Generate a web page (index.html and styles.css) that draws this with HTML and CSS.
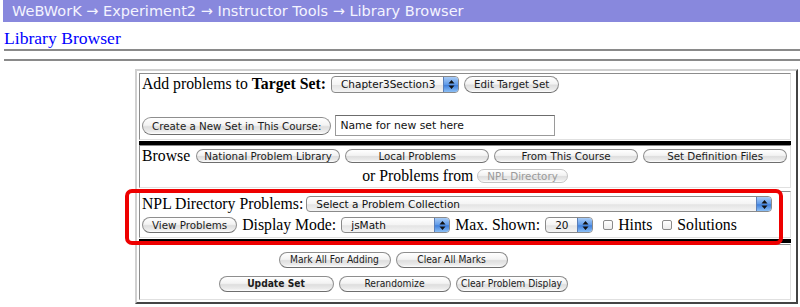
FILE: index.html
```html
<!DOCTYPE html>
<html lang="en">
<head>
  <meta charset="UTF-8" />
  <title>Library Browser</title>
  <link rel="stylesheet" href="styles.css">
</head>
<body>
  <div class="topbar">WeBWorK &rarr; Experiment2 &rarr; Instructor Tools &rarr; Library Browser</div>
  <h2 class="page-title"><a href="#">Library Browser</a></h2>
  <hr class="rule">
  <hr class="rule second">

  <div class="browser">
    <div class="panel">
      <div class="cell target-cell">
        <div class="row">
          <span class="label">Add problems to <b>Target Set:</b></span>
          <span class="popup set-popup">
            <span class="popup-text">Chapter3Section3</span>
            <span class="popup-arrows"><svg width="7" height="11" viewBox="0 0 7 11"><path d="M3.5 1 L6.5 4.5 L0.5 4.5 Z M3.5 10 L6.5 6.5 L0.5 6.5 Z" fill="#111"/></svg></span>
          </span>
          <button class="btn tall">Edit Target Set</button>
        </div>
        <div class="row new-set-row">
          <button class="btn taller">Create a New Set in This Course:</button>
          <input class="text-field" type="text" value="Name for new set here">
        </div>
      </div>

      <div class="bar"></div>

      <div class="cell browse-cell">
        <div class="row">
          <span class="label browse-label">Browse</span>
          <button class="btn browse-btn">National Problem Library</button>
          <button class="btn browse-btn">Local Problems</button>
          <button class="btn browse-btn">From This Course</button>
          <button class="btn browse-btn">Set Definition Files</button>
        </div>
        <div class="row centered">
          <span class="label">or Problems from</span>
          <button class="btn disabled">NPL Directory</button>
        </div>
      </div>

      <div class="cell npl-cell">
        <div class="row">
          <span class="label">NPL Directory Problems:</span>
          <span class="popup collection-popup">
            <span class="popup-text">Select a Problem Collection</span>
            <span class="popup-arrows"><svg width="7" height="11" viewBox="0 0 7 11"><path d="M3.5 1 L6.5 4.5 L0.5 4.5 Z M3.5 10 L6.5 6.5 L0.5 6.5 Z" fill="#111"/></svg></span>
          </span>
        </div>
        <div class="row">
          <button class="btn">View Problems</button>
          <span class="label">Display Mode:</span>
          <span class="popup mode-popup">
            <span class="popup-text">jsMath</span>
            <span class="popup-arrows"><svg width="7" height="11" viewBox="0 0 7 11"><path d="M3.5 1 L6.5 4.5 L0.5 4.5 Z M3.5 10 L6.5 6.5 L0.5 6.5 Z" fill="#111"/></svg></span>
          </span>
          <span class="label">Max. Shown:</span>
          <span class="popup count-popup">
            <span class="popup-text">20</span>
            <span class="popup-arrows"><svg width="7" height="11" viewBox="0 0 7 11"><path d="M3.5 1 L6.5 4.5 L0.5 4.5 Z M3.5 10 L6.5 6.5 L0.5 6.5 Z" fill="#111"/></svg></span>
          </span>
          <label class="check"><span class="box"></span>Hints</label>
          <label class="check"><span class="box"></span>Solutions</label>
        </div>
      </div>

      <div class="bar"></div>

      <div class="cell actions-cell">
        <div class="row centered">
          <button class="btn action-btn">Mark All For Adding</button>
          <button class="btn action-btn">Clear All Marks</button>
        </div>
        <div class="row centered">
          <button class="btn action-btn update">Update Set</button>
          <button class="btn action-btn">Rerandomize</button>
          <button class="btn action-btn">Clear Problem Display</button>
        </div>
      </div>
    </div>

    <!-- annotation drawn over the screenshot -->
    <div class="highlight"></div>
  </div>
</body>
</html>
```

FILE: styles.css
```css
* {
  box-sizing: border-box;
}

body {
  margin: 0;
  background: #fff;
  font-family: "Liberation Serif", "Times New Roman", serif;
  font-size: 15.75px;
  color: #000;
}

.topbar {
  margin-left: 3px;
  height: 22px;
  padding-left: 9px;
  background: #8888dd;
  color: #f4f4ff;
  font-family: "DejaVu Sans", sans-serif;
  font-size: 14.5px;
  line-height: 22px;
  white-space: nowrap;
}

.page-title {
  margin: 6px 0 0 4px;
  height: 20px;
  font-size: 17.6px;
  font-weight: normal;
  line-height: 21px;
}

.page-title a {
  color: #0000ff;
  text-decoration: none;
}

.rule {
  margin: 1px 0 0 4px;
  height: 0;
  border: 0;
  border-top: 2px solid #8a8a8a;
}

.rule.second {
  margin-top: 8px;
}

.browser {
  position: relative;
  margin: 8px 0 0 135px;
  width: 663px;
}

.panel {
  border: 2px solid;
  border-color: #d0d0d0 #444 #444 #d0d0d0;
  padding: 2px 5px 2px 2px;
}

.cell {
  border: 1px solid;
  border-color: #8c8c8c #e0e0e0 #e0e0e0 #8c8c8c;
  padding: 1px 2px 2px 2px;
}

.bar {
  margin-top: 1px;
  height: 4px;
  background: #000;
}

.row {
  display: flex;
  align-items: center;
  gap: 5px;
  height: 18px;
  white-space: nowrap;
}

.row.centered {
  justify-content: center;
}

.target-cell {
  height: 67px;
}

.new-set-row {
  margin-top: 22px;
  gap: 4px;
  height: 21px;
}

.browse-cell {
  padding-top: 1px;
}

.browse-cell .row + .row {
  margin-top: 2px;
  gap: 4px;
}

.browse-label {
  margin-right: 1px;
}

.npl-cell {
  margin-top: 3px;
  padding: 3px 2px 3px 2px;
}

.npl-cell .row + .row {
  margin-top: 3px;
}

.npl-cell .row:first-child {
  gap: 3px;
}

.actions-cell {
  margin-top: 1px;
  padding: 6px 146px 6px 2px;
}

.actions-cell .row + .row {
  margin-top: 6px;
}

/* aqua style push buttons */
.btn {
  height: 16px;
  padding: 0 9px;
  border: 1px solid #8e8e8e;
  border-bottom-color: #6e6e6e;
  border-radius: 9px;
  background: linear-gradient(#ffffff, #f3f3f3 45%, #dedede 55%, #ececec 85%, #ffffff);
  color: #1c1c1c;
  font-family: "DejaVu Sans", sans-serif;
  font-size: 10.3px;
  line-height: 14px;
  white-space: nowrap;
}

.btn.tall {
  height: 17px;
}

.btn.taller {
  height: 18px;
}

.btn.disabled {
  color: #9a9a9a;
  border-color: #c4c4c4;
  height: 14px;
  line-height: 12px;
}

.browse-btn {
  width: 144px;
  height: 14px;
  line-height: 12px;
  padding: 0;
}

.action-btn {
  width: 112px;
  height: 16px;
  padding: 0;
  font-family: "DejaVu Sans Condensed", "Liberation Sans Narrow", "Liberation Sans", sans-serif;
  font-size: 10.2px;
  font-stretch: condensed;
}

.action-btn.update {
  width: 115px;
  font-weight: bold;
}

/* popup menus */
.popup {
  display: flex;
  align-items: center;
  height: 17px;
  border: 1px solid #8a8a8a;
  border-radius: 4px;
  background: linear-gradient(#ffffff, #f4f4f4 50%, #e4e4e4 55%, #f4f4f4);
  font-family: "DejaVu Sans", sans-serif;
  font-size: 10.5px;
  color: #111;
  overflow: hidden;
}

.popup-text {
  flex: 1;
  padding-left: 9px;
}

.popup-arrows {
  display: flex;
  align-items: center;
  justify-content: center;
  width: 15px;
  height: 100%;
  border-left: 1px solid #5b7fb8;
  background: linear-gradient(#a9ccf6, #5f9ae8 50%, #3f7fdc 55%, #8cc0f6);
}

.set-popup {
  width: 128px;
}

.collection-popup {
  width: 466px;
  height: 16px;
}

.mode-popup {
  width: 109px;
  height: 16px;
}

.count-popup {
  width: 48px;
  height: 16px;
}

.text-field {
  width: 220px;
  height: 21px;
  padding: 0 4px;
  border: 1px solid #9a9a9a;
  border-top-color: #6c6c6c;
  font-family: "DejaVu Sans", sans-serif;
  font-size: 10.8px;
  color: #111;
}

.check {
  display: flex;
  align-items: center;
  gap: 5px;
  margin-left: 5px;
}

.check .box {
  width: 10px;
  height: 10px;
  border: 1px solid #8a8a8a;
  border-radius: 2px;
  background: linear-gradient(#ffffff, #ececec);
}

.highlight {
  position: absolute;
  left: -10px;
  top: 120px;
  width: 658px;
  height: 56px;
  border: 4px solid #ee0000;
  border-radius: 7px;
  pointer-events: none;
}
```
